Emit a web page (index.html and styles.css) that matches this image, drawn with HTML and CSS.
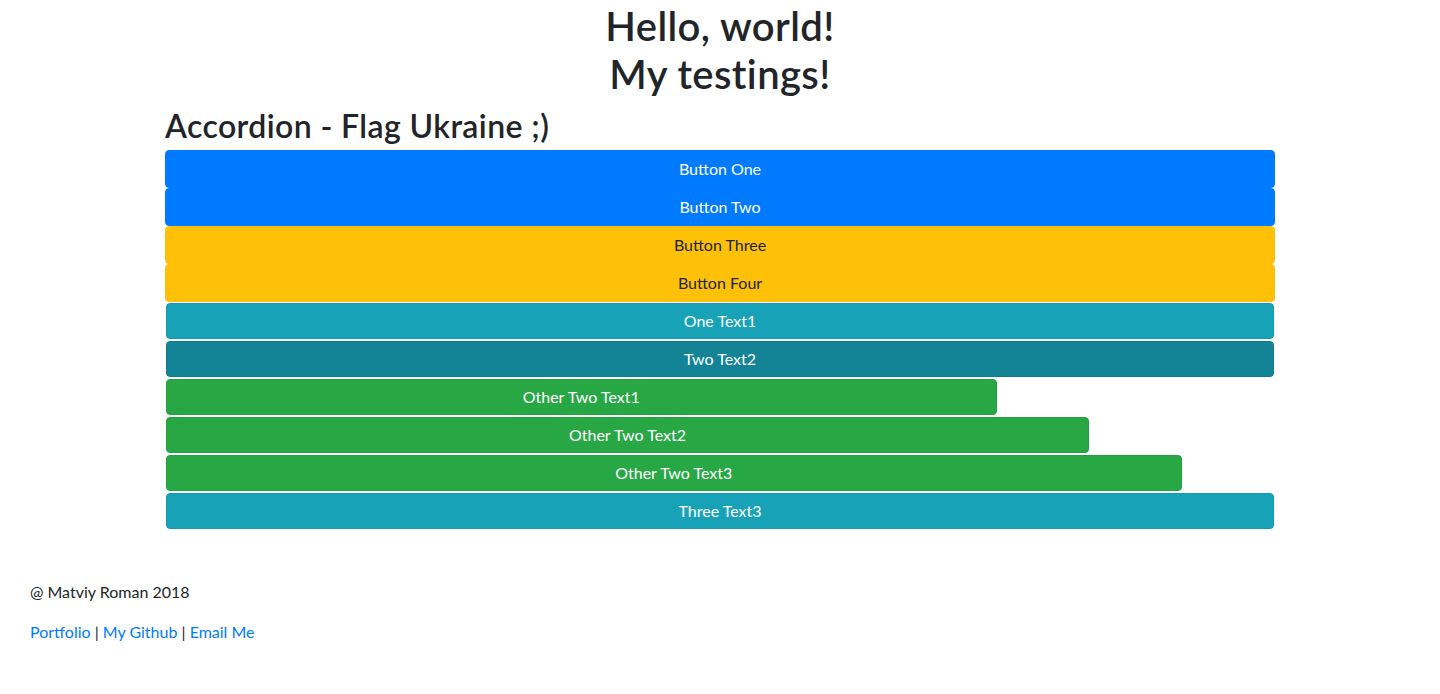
FILE: index.html
```html
<!DOCTYPE html>
<html lang="en">
<head>
<meta charset="utf-8">
<title>Hello, world!</title>
<link rel="stylesheet" href="styles.css">
</head>
<body>
<main class="container">
  <h1 class="title">Hello, world!<br>My testings!</h1>
  <h2 class="subtitle">Accordion - Flag Ukraine ;)</h2>
  <div class="accordion">
    <button class="btn btn-full btn-primary">Button One</button>
    <button class="btn btn-full btn-primary">Button Two</button>
    <button class="btn btn-full btn-warning">Button Three</button>
    <button class="btn btn-full btn-warning">Button Four</button>
    <button class="btn btn-row btn-info">One Text1</button>
    <button class="btn btn-row btn-info-dark">Two Text2</button>
    <button class="btn btn-row btn-success w-9">Other Two Text1</button>
    <button class="btn btn-row btn-success w-10">Other Two Text2</button>
    <button class="btn btn-row btn-success w-11">Other Two Text3</button>
    <button class="btn btn-row btn-info">Three Text3</button>
  </div>
</main>
<footer class="footer">
  <p>@ Matviy Roman 2018</p>
  <p><a href="#">Portfolio</a> | <a href="#">My Github</a> | <a href="#">Email Me</a></p>
</footer>
</body>
</html>
```

FILE: styles.css
```css
* { box-sizing: border-box; }

body {
  margin: 0;
  font-family: Lato, "Open Sans", sans-serif;
  font-size: 16px;
  line-height: 24px;
  color: #212529;
  background: #fff;
}

.container {
  width: 1140px;
  margin: 0 auto;
  padding: 2px 15px 0;
}

.title {
  margin: 0 0 8px;
  font-size: 40px;
  line-height: 48px;
  font-weight: 600;
  letter-spacing: 0.4px;
  text-align: center;
}

.subtitle {
  margin: 0 0 5px;
  font-size: 32px;
  line-height: 39px;
  font-weight: 600;
  letter-spacing: 0.4px;
}

.accordion {
  display: flex;
  flex-direction: column;
  align-items: flex-start;
}

.btn {
  display: block;
  font-family: inherit;
  font-size: 16px;
  line-height: 24px;
  text-align: center;
  border: 1px solid transparent;
  border-radius: 4px;
  padding: 0 12px;
  cursor: pointer;
}

.btn-full {
  width: 100%;
  height: 38px;
}

.btn-row {
  width: calc(100% - 2px);
  height: 36px;
  margin: 1px;
}

.btn-row.w-9 { width: calc(75% - 2px); }
.btn-row.w-10 { width: calc(83.3333% - 2px); }
.btn-row.w-11 { width: calc(91.6667% - 2px); }

.btn-primary { background: #007bff; border-color: #007bff; color: #fff; }
.btn-warning { background: #ffc107; border-color: #ffc107; color: #212529; }
.btn-info { background: #17a2b8; border-color: #1499ae; color: #fff; }
.btn-info-dark { background: #138496; border-color: #117a8b; color: #fff; }
.btn-success { background: #28a745; border-color: #24a040; color: #fff; }

.footer {
  padding: 50px 30px 0;
}

.footer p {
  margin: 0 0 16px;
}

.footer a {
  color: #007bff;
  text-decoration: none;
}
```
